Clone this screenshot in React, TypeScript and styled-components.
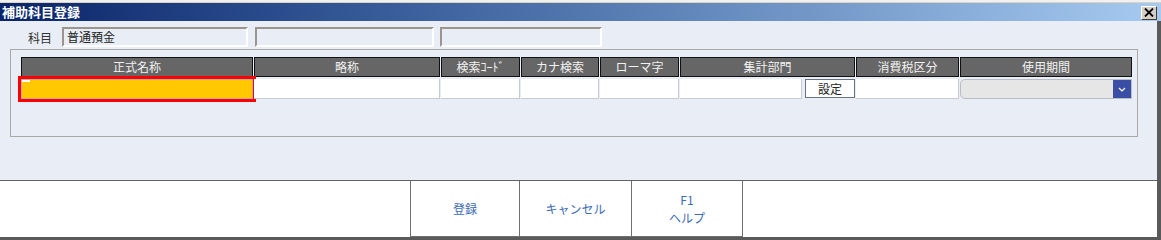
import React from "react";
import styled, { createGlobalStyle } from "styled-components";

const Global = createGlobalStyle`
  html, body { margin: 0; padding: 0; background: #ffffff; }
  body { font-family: "Noto Sans CJK JP", "Noto Sans", sans-serif; }
  * { box-sizing: border-box; }
`;

const Win = styled.div`
  width: 1161px;
  height: 240px;
  display: flex;
  flex-direction: column;
  overflow: hidden;
  font-size: 12px;
`;

const TopEdge = styled.div`
  height: 3px;
  background: #f3f1ec;
  border-bottom: 1px solid #d9d3c6;
`;

const TitleBar = styled.div`
  height: 18px;
  display: flex;
  align-items: center;
  justify-content: space-between;
  padding: 0 4px 0 2px;
  background: linear-gradient(to right, #0a246a 0%, #3a5f9c 35%, #7398c8 70%, #a6caf0 100%);
`;

const Title = styled.span`
  color: #ffffff;
  font-weight: bold;
  font-size: 13px;
  line-height: 18px;
  letter-spacing: 0;
`;

const CloseBtn = styled.div`
  width: 16px;
  height: 14px;
  margin-top: 1px;
  background: #d4d0c8;
  border-top: 1px solid #ffffff;
  border-left: 1px solid #ffffff;
  border-right: 1px solid #404040;
  border-bottom: 1px solid #404040;
  display: flex;
  align-items: center;
  justify-content: center;
`;

const Frame = styled.div`
  flex: 1;
  display: flex;
  flex-direction: column;
  border-right: 4px solid #5a5a5a;
  border-bottom: 3px solid #5a5a5a;
  box-shadow: inset -1px -1px 0 #c8c8c8;
`;

const Body = styled.div`
  height: 159px;
  background: #e9eef6;
  padding-top: 6px;
  display: flex;
  flex-direction: column;
`;

const FieldRow = styled.div`
  display: flex;
  align-items: center;
  padding-left: 28px;
  height: 20px;
`;

const Label = styled.span`
  width: 34px;
  color: #333333;
  font-size: 12px;
`;

const Field = styled.div<{ $w: number; $ml?: number }>`
  width: ${(p) => p.$w}px;
  margin-left: ${(p) => p.$ml ?? 0}px;
  height: 20px;
  border-top: 2px solid #9b958e;
  border-left: 2px solid #9b958e;
  border-right: 2px solid #ffffff;
  border-bottom: 2px solid #ffffff;
  padding-left: 3px;
  font-size: 12px;
  line-height: 16px;
  color: #222222;
`;

const Panel = styled.div`
  margin: 2px 19px 0 10px;
  height: 88px;
  border: 1px solid #a8a8a8;
  padding: 7px 0 0 10px;
`;

const COLS = "232px 186px 79px 78px 79px 175px 103px 172px";

const HeadRow = styled.div`
  display: grid;
  grid-template-columns: ${COLS};
  column-gap: 1px;
  height: 20px;
`;

const HeadCell = styled.div`
  background: #666666;
  border: 1px solid #111111;
  color: #f2f2f2;
  font-size: 12px;
  display: flex;
  align-items: center;
  justify-content: center;
  line-height: 1;
`;

const DataRow = styled.div`
  display: grid;
  grid-template-columns: ${COLS};
  column-gap: 1px;
  height: 20px;
  margin-top: 2px;
`;

const Cell = styled.div<{ $active?: boolean }>`
  position: relative;
  background: ${(p) => (p.$active ? "#ffc800" : "#ffffff")};
  border-right: 1px solid #c6cad2;
  border-bottom: 1px solid #c6cad2;
  ${(p) =>
    p.$active
      ? `border: 1px solid #b0b0b0; outline: 3px solid #ff0000; outline-offset: 0px;`
      : ""}
`;

const Caret = styled.span`
  position: absolute;
  left: 0;
  top: 0;
  width: 8px;
  height: 2px;
  background: #ffffff;
`;

const SplitCell = styled.div`
  display: flex;
  gap: 3px;
`;

const SubInput = styled.div`
  flex: 1;
  background: #ffffff;
  border-right: 1px solid #c6cad2;
  border-bottom: 1px solid #c6cad2;
`;

const SetBtn = styled.div`
  width: 50px;
  height: 19px;
  background: #ffffff;
  border: 1px solid #6a7480;
  font-size: 12px;
  color: #222222;
  display: flex;
  align-items: center;
  justify-content: center;
`;

const Combo = styled.div`
  display: flex;
  height: 20px;
  border: 1px solid #b8bcc4;
  border-radius: 5px 0 0 5px;
  background: #e6e6e6;
  overflow: hidden;
`;

const ComboText = styled.div`
  flex: 1;
`;

const ComboBtn = styled.div`
  width: 18px;
  background: #3a4ea6;
  display: flex;
  align-items: center;
  justify-content: center;
`;

const Footer = styled.div`
  flex: 1;
  background: #ffffff;
  border-top: 1px solid #5f6368;
  display: flex;
  justify-content: flex-start;
  padding-left: 410px;
`;

const FootBtn = styled.div<{ $w: number }>`
  width: ${(p) => p.$w}px;
  height: 56px;
  border: 1px solid #707070;
  border-top: none;
  margin-left: -1px;
  &:first-child { margin-left: 0; }
  display: flex;
  flex-direction: column;
  align-items: center;
  justify-content: center;
  color: #3d6cb3;
  font-size: 12px;
  line-height: 18px;
`;

export default function App() {
  return (
    <>
      <Global />
      <Win>
        <TopEdge />
        <TitleBar>
          <Title>補助科目登録</Title>
          <CloseBtn>
            <svg width="10" height="9" viewBox="0 0 10 9">
              <path d="M1 0.5 L9 8.5 M9 0.5 L1 8.5" stroke="#000" strokeWidth="1.8" />
            </svg>
          </CloseBtn>
        </TitleBar>
        <Frame>
          <Body>
            <FieldRow>
              <Label>科目</Label>
              <Field $w={186}>普通預金</Field>
              <Field $w={179} $ml={7} />
              <Field $w={162} $ml={6} />
            </FieldRow>
            <Panel>
              <HeadRow>
                <HeadCell>正式名称</HeadCell>
                <HeadCell>略称</HeadCell>
                <HeadCell>検索ｺｰﾄﾞ</HeadCell>
                <HeadCell>カナ検索</HeadCell>
                <HeadCell>ローマ字</HeadCell>
                <HeadCell>集計部門</HeadCell>
                <HeadCell>消費税区分</HeadCell>
                <HeadCell>使用期間</HeadCell>
              </HeadRow>
              <DataRow>
                <Cell $active>
                  <Caret />
                </Cell>
                <Cell />
                <Cell />
                <Cell />
                <Cell />
                <SplitCell>
                  <SubInput />
                  <SetBtn>設定</SetBtn>
                </SplitCell>
                <Cell />
                <Combo>
                  <ComboText />
                  <ComboBtn>
                    <svg width="8" height="5" viewBox="0 0 8 5">
                      <path d="M1 1 L4 4 L7 1" stroke="#fff" strokeWidth="1.2" fill="none" />
                    </svg>
                  </ComboBtn>
                </Combo>
              </DataRow>
            </Panel>
          </Body>
          <Footer>
            <FootBtn $w={110}>登録</FootBtn>
            <FootBtn $w={113}>キャンセル</FootBtn>
            <FootBtn $w={112}>
              <span>F1</span>
              <span>ヘルプ</span>
            </FootBtn>
          </Footer>
        </Frame>
      </Win>
    </>
  );
}
